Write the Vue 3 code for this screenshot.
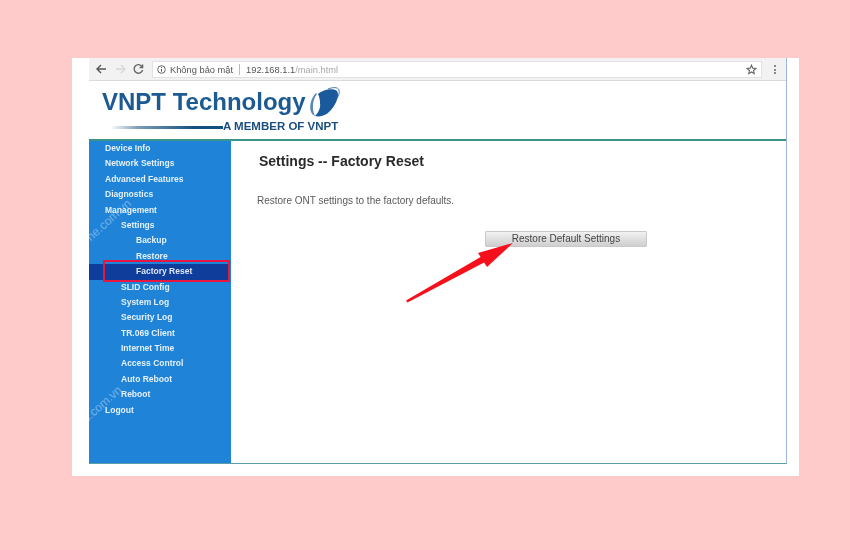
<script setup>
const menu = [
  { label: 'Device Info', level: 0 },
  { label: 'Network Settings', level: 0 },
  { label: 'Advanced Features', level: 0 },
  { label: 'Diagnostics', level: 0 },
  { label: 'Management', level: 0 },
  { label: 'Settings', level: 1 },
  { label: 'Backup', level: 2 },
  { label: 'Restore', level: 2 },
  { label: 'Factory Reset', level: 2, active: true },
  { label: 'SLID Config', level: 1 },
  { label: 'System Log', level: 1 },
  { label: 'Security Log', level: 1 },
  { label: 'TR.069 Client', level: 1 },
  { label: 'Internet Time', level: 1 },
  { label: 'Access Control', level: 1 },
  { label: 'Auto Reboot', level: 1 },
  { label: 'Reboot', level: 1 },
  { label: 'Logout', level: 0 }
]
</script>

<template>
  <div class="page">
    <div class="card">
      <div class="window">
        <div class="toolbar">
          <svg class="nav" width="50" height="14" viewBox="0 0 50 14">
            <path d="M11 7H2M6 3 2 7l4 4" fill="none" stroke="#555" stroke-width="1.4" />
            <path d="M21 7h9M26 3l4 4-4 4" fill="none" stroke="#d6d6d6" stroke-width="1.3" />
            <path d="M47 4.500A4.300 4.300 0 1 0 47.600 8M47.600 2.500v3h-3" fill="none" stroke="#666" stroke-width="1.4" />
          </svg>
          <div class="address">
            <svg class="info" width="9" height="9" viewBox="0 0 9 9">
              <circle cx="4.500" cy="4.500" r="3.800" fill="none" stroke="#555" stroke-width=".9" />
              <path d="M4.500 4v2.600M4.500 2.200v1" stroke="#555" />
            </svg>
            <span class="secure">Không bảo mật</span>
            <i class="sep"></i>
            <span class="url"><b>192.168.1.1</b>/main.html</span>
            <svg class="star" width="11" height="11" viewBox="0 0 12 12">
              <path d="M6 1.300 7.400 4.500l3.400.3-2.600 2.300.8 3.400L6 8.700 3 10.500l.8-3.400L1.200 4.800l3.400-.3z" fill="none" stroke="#666" stroke-width="1.200" />
            </svg>
          </div>
          <div class="dots"><i></i><i></i><i></i></div>
        </div>

        <header class="brand">
          <div class="logo-line">
            <span class="logo-text">VNPT Technology</span>
            <svg class="globe" width="34" height="33" viewBox="0 0 34 33">
              <path d="M12 8C17 3 28 2 31 5c3 4-1 15-9 22-4 3-9 4-13 3 3-3 6-8 5-13 0-4-1-7-2-9z" fill="#1a5a9c" />
              <path d="M10 7C5 12 3 20 5 26c1 2 2 3 4 4C6 24 6 14 11 8z" fill="#5a88b2" />
              <path d="M22 3c5-2 10-2 11 1 1 3-1 7-2 8" fill="none" stroke="#1a5a9c" stroke-width=".8" />
            </svg>
          </div>
          <div class="tagline">
            <i class="swoosh"></i>
            <span>A MEMBER OF VNPT</span>
          </div>
        </header>

        <div class="body">
          <nav class="sidebar">
            <div
              v-for="item in menu"
              :key="item.label"
              class="row"
              :class="['level' + item.level, { active: item.active }]"
            >{{ item.label }}</div>
            <div class="highlight"></div>
            <span class="mark mark-a">ne.com.vn</span>
            <span class="mark mark-b">s.com.vn</span>
          </nav>

          <main class="content">
            <h1>Settings -- Factory Reset</h1>
            <p>Restore ONT settings to the factory defaults.</p>
            <div class="actions">
              <button type="button">Restore Default Settings</button>
            </div>
            <svg class="arrow" width="120" height="70" viewBox="0 0 120 70">
              <path d="M1 63.500 2.500 65.500 82 24 79 18z" fill="#f5101c" />
              <path d="M108 6 73 16 82 30z" fill="#f5101c" />
            </svg>
          </main>
        </div>
      </div>
    </div>
  </div>
</template>

<style>
html, body { margin: 0; background: #ffcaca; }
</style>

<style scoped>
.page {
  width: 850px;
  height: 550px;
  padding: 58px 0 0 72px;
  box-sizing: border-box;
  background: #ffcaca;
  overflow: hidden;
  font-family: "Liberation Sans", Arial, sans-serif;
}
.card {
  width: 727px;
  height: 418px;
  padding-left: 17px;
  box-sizing: border-box;
  background: #fff;
}
.window {
  width: 698px;
  height: 406px;
  box-sizing: border-box;
  display: flex;
  flex-direction: column;
  background: #fff;
  border-right: 1px solid #9db6d6;
  border-bottom: 1px solid #5a9fa8;
}
.toolbar {
  height: 23px;
  flex: none;
  box-sizing: border-box;
  padding: 3px 6px 0 6px;
  display: flex;
  align-items: flex-start;
  background: #f2f2f2;
  border-bottom: 1px solid #dadada;
  filter: blur(.5px);
}
.nav { margin: 1px 7px 0 0; flex: none; }
.address {
  width: 610px;
  height: 17px;
  box-sizing: border-box;
  padding: 0 4px 0 4px;
  display: flex;
  align-items: center;
  background: #fff;
  border: 1px solid #e2e2e2;
  font-size: 9.300px;
  color: #555;
  white-space: nowrap;
}
.info { flex: none; }
.secure { margin-left: 4px; }
.sep { width: 1px; height: 11px; margin: 0 6px; background: #bbb; flex: none; }
.url { color: #a8a8a8; }
.url b { font-weight: 400; color: #555; }
.star { margin-left: auto; }
.dots {
  display: flex;
  flex-direction: column;
  gap: 1.500px;
  margin: 4px 0 0 12px;
}
.dots i { width: 2px; height: 2px; background: #888; }
.brand {
  height: 60px;
  flex: none;
  box-sizing: border-box;
  padding: 4px 0 0 13px;
  border-bottom: 2px solid #3b9489;
  filter: blur(.45px);
}
.logo-line { display: flex; align-items: flex-start; height: 33px; }
.logo-text {
  font-size: 24px;
  line-height: 33px;
  font-weight: 700;
  color: #1c5a92;
  width: 204px;
  white-space: nowrap;
}
.globe { flex: none; margin-top: 1px; }
.tagline {
  display: flex;
  align-items: center;
  padding-left: 8px;
  margin-top: 2px;
  font-size: 11.500px;
  line-height: 12px;
  font-weight: 700;
  color: #1a4f80;
  white-space: nowrap;
}
.swoosh {
  width: 113px;
  height: 3px;
  margin: 2px 0 0 0;
  background: linear-gradient(90deg, #fff, #7b9db8 25%, #14507d 75%);
}
.body { flex: 1; min-height: 0; display: flex; }
.sidebar {
  position: relative;
  width: 142px;
  flex: none;
  overflow: hidden;
  background: #1f84d8;
}
.row {
  height: 15.400px;
  line-height: 15.400px;
  font-size: 8.500px;
  font-weight: 700;
  color: #e4f0fb;
  white-space: nowrap;
  filter: blur(.5px);
}
.level0 { padding-left: 16px; }
.level1 { padding-left: 32px; }
.level2 { padding-left: 47px; }
.active {
  width: 140px;
  box-sizing: border-box;
  background: #0e3d9c;
  color: #dfe8f8;
}
.highlight {
  position: absolute;
  left: 14px;
  top: 119px;
  width: 127px;
  height: 22px;
  box-sizing: border-box;
  border: 2px solid #e8173f;
}
.mark {
  position: absolute;
  font-size: 12px;
  color: rgba(255, 255, 255, .38);
  transform: rotate(-42deg);
  white-space: nowrap;
}
.mark-a { left: -8px; top: 72px; }
.mark-b { left: -11px; top: 256px; }
.content {
  position: relative;
  flex: 1;
  padding: 12px 0 0 26px;
  color: #333;
}
h1 {
  margin: 0 0 0 2px;
  font-size: 14px;
  line-height: 17px;
  font-weight: 700;
  color: #2a2a2a;
  filter: blur(.4px);
}
p {
  margin: 25px 0 0;
  font-size: 10px;
  line-height: 12px;
  color: #5a5a5a;
  filter: blur(.4px);
}
.actions { margin: 24px 0 0 228px; }
button {
  width: 162px;
  height: 16px;
  padding: 0;
  display: block;
  font-family: inherit;
  font-size: 10px;
  line-height: 14px;
  color: #444;
  background: linear-gradient(#f2f2f2, #cfcfcf);
  border: 1px solid #c9c9c9;
  border-radius: 1px;
  filter: blur(.35px);
}
.arrow {
  position: absolute;
  left: 174px;
  top: 96px;
}
</style>
